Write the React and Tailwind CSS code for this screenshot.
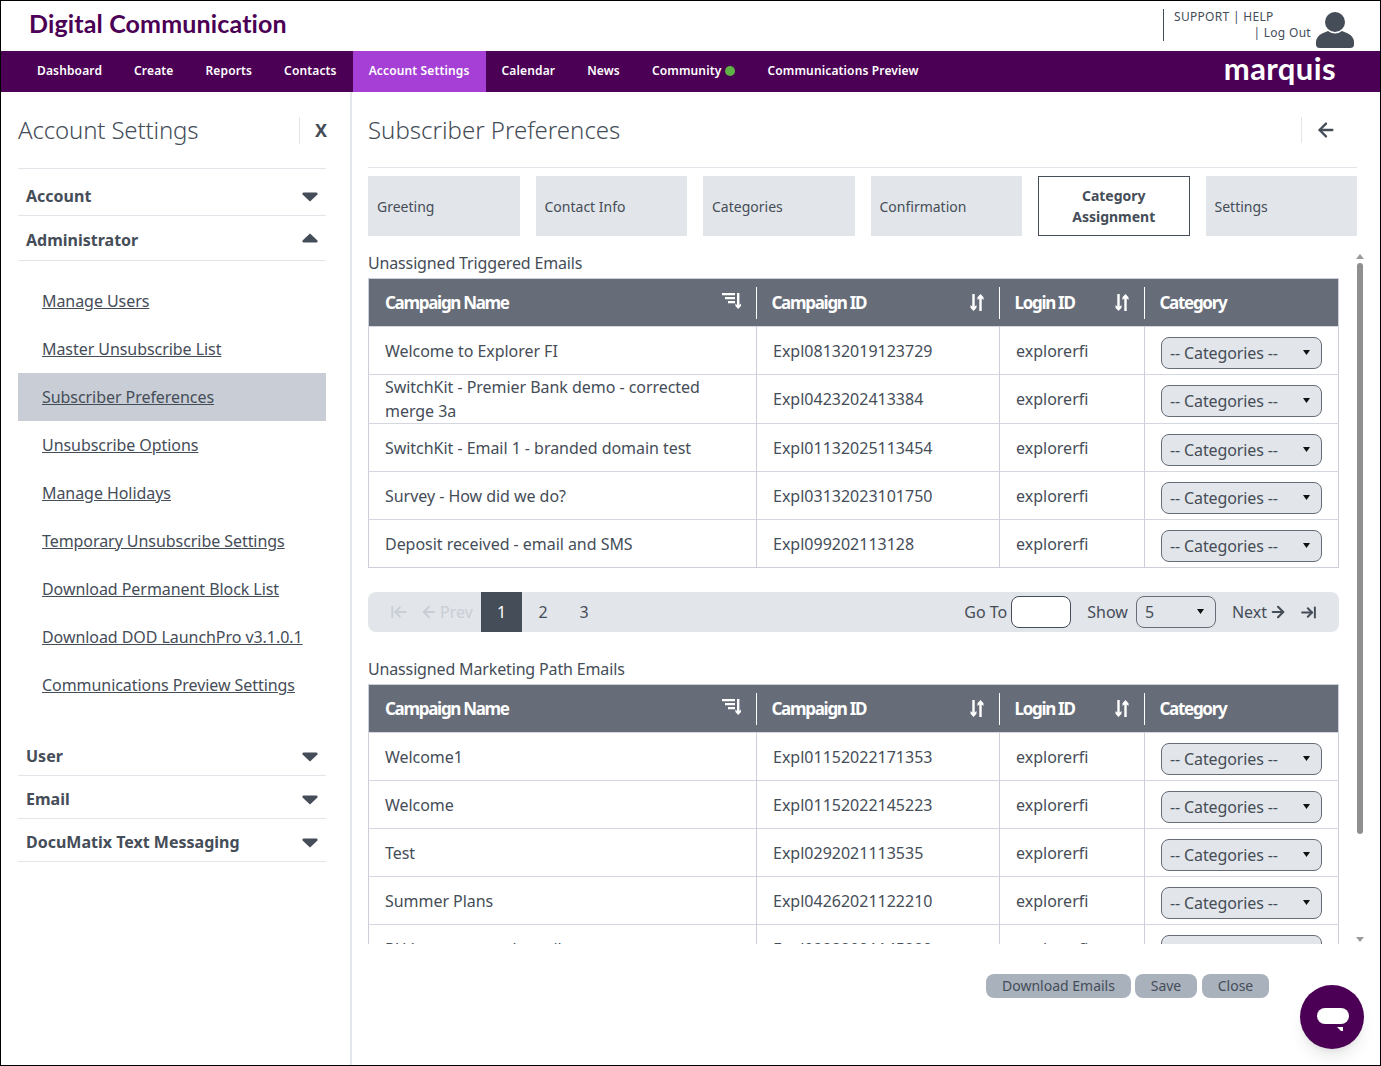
import React from 'react';
import { ArrowLeft, ArrowRight, ArrowLeftToLine, ArrowRightToLine } from 'lucide-react';

const navItems = ['Dashboard', 'Create', 'Reports', 'Contacts'];
const navItemsAfter = ['Calendar', 'News'];

const adminLinks = [
    'Manage Users',
    'Master Unsubscribe List',
    'Subscriber Preferences',
    'Unsubscribe Options',
    'Manage Holidays',
    'Temporary Unsubscribe Settings',
    'Download Permanent Block List',
    'Download DOD LaunchPro v3.1.0.1',
    'Communications Preview Settings',
];

const tabs = ['Greeting', 'Contact Info', 'Categories', 'Confirmation', 'Category Assignment', 'Settings'];

const triggered = [
    { name: 'Welcome to Explorer FI', id: 'Expl08132019123729' },
    { name: 'SwitchKit - Premier Bank demo - corrected merge 3a', id: 'Expl0423202413384', tall: true },
    { name: 'SwitchKit - Email 1 - branded domain test', id: 'Expl01132025113454' },
    { name: 'Survey - How did we do?', id: 'Expl03132023101750' },
    { name: 'Deposit received - email and SMS', id: 'Expl099202113128' },
];

const marketing = [
    { name: 'Welcome1', id: 'Expl01152022171353' },
    { name: 'Welcome', id: 'Expl01152022145223' },
    { name: 'Test', id: 'Expl0292021113535' },
    { name: 'Summer Plans', id: 'Expl04262021122210' },
    { name: 'PH Loan renewed email', id: 'Expl02232021145222' },
];

const Caret = ({ up }) => (
    <svg width="16" height="10" viewBox="0 0 16 10" className="text-[#454d58]">
        <path d={up ? 'M8 .5 15.500 7.500Q16 9.500 14.500 9.500H1.500Q0 9.500.5 7.500Z' : 'M.5 2.500Q0 .5 1.500.5h13q1.500 0 1 2L8 9.500Z'} fill="currentColor" />
    </svg>
);

const SmallCaret = () => (
    <svg width="7" height="5" viewBox="0 0 7 5" className="mb-[1px]"><path d="M0 0h7L3.500 5Z" fill="#111" /></svg>
);

// three shrinking bars with a down arrow beside them
const SortNameIcon = () => (
    <svg width="19" height="16" viewBox="0 0 19 16" fill="#fff" className="mb-[3px]">
        <path d="M0 0h13v2.300H0zM3 4h10v2.300H3zM6 8h7v2.300H6z" />
        <path d="M15 0h2.400v12l1.600-1.500V13l-2.800 3-2.800-3v-2.500l1.600 1.500z" />
    </svg>
);

// down arrow and up arrow side by side
const SortIcon = () => (
    <svg width="14" height="17" viewBox="0 0 14 17" fill="#fff">
        <path d="M2.300 0h2.400v12.500L6.500 11v2.700L3.500 17 .5 13.700V11l1.800 1.500z" />
        <path d="M9.300 17h2.400V4.500L13.500 6V3.300L10.500 0l-3 3.300V6l1.800-1.500z" />
    </svg>
);

const SidebarHeading = ({ label, up, className }) => (
    <div className={`flex items-center justify-between border-b border-[#e2e5e9] pl-2 pr-[8px] ${className}`}>
        <span className="text-[16px] font-bold text-[#454d58]">{label}</span>
        <Caret up={up} />
    </div>
);

const Sidebar = () => (
    <aside className="flex w-[351px] shrink-0 flex-col border-r-2 border-[#e2e5e9] pl-[17px] pr-[24px]">
        <div className="flex h-[76px] items-center justify-between">
            <h2 className="text-[24px] font-light tracking-[-0.15px] text-[#454d58]">Account Settings</h2>
            <div className="-mr-[1px] flex h-[27px] w-[28px] items-center justify-end border-l border-[#e2e5e9] text-[18px] font-bold text-[#454d58]">X</div>
        </div>
        <div className="border-t border-[#e2e5e9]">
            <SidebarHeading label="Account" className="h-[47px] pt-[8px] [&>svg]:mt-[2px]" />
            <SidebarHeading label="Administrator" up className="h-[45px] pt-[4px] [&>svg]:-mt-[4px]" />
        </div>
        <ul className="pt-[16px]">
            {adminLinks.map((link) => (
                <li key={link} className={`flex h-[48px] items-center pl-[24px] text-[16px] tracking-[-0.06px] text-[#454d58] underline ${link === 'Subscriber Preferences' ? 'bg-[#c9ced6]' : ''}`}>
                    {link}
                </li>
            ))}
        </ul>
        <div className="pt-[24px]">
            <SidebarHeading label="User" className="h-[43px] pt-[3px] [&>svg]:mt-[2px]" />
            <SidebarHeading label="Email" className="h-[43px] pt-[3px] [&>svg]:mt-[2px]" />
            <SidebarHeading label="DocuMatix Text Messaging" className="h-[43px] pt-[3px] [&>svg]:mt-[2px]" />
        </div>
    </aside>
);

const Select = ({ label, className }) => (
    <div className={`flex items-center justify-between rounded-[8px] border border-[#666c78] pl-[8px] pr-[11px] text-[16px] tracking-[-0.12px] text-[#454d58] ${className}`}>
        <span>{label}</span>
        <SmallCaret />
    </div>
);

const HeaderCell = ({ label, icon, className }) => (
    <th className={`p-0 text-left font-bold ${className}`}>
        <div className="flex h-[32px] items-center justify-between pl-[16px] pr-[15px] text-[17px] tracking-[-1.3px] text-white">
            <span>{label}</span>
            {icon}
        </div>
    </th>
);

const EmailTable = ({ rows }) => (
    <table className="w-[970px] table-fixed border-collapse border border-[#ccced9] text-[16px] text-[#454d58]">
        <colgroup>
            <col className="w-[388px]" />
            <col className="w-[243px]" />
            <col className="w-[145px]" />
            <col className="w-[194px]" />
        </colgroup>
        <thead>
            <tr className="h-[48px] bg-[#666c78]">
                <HeaderCell label="Campaign Name" icon={<SortNameIcon />} className="[&>div]:border-r [&>div]:border-white" />
                <HeaderCell label="Campaign ID" icon={<SortIcon />} className="[&>div]:border-r [&>div]:border-white [&>div]:pl-[15px]" />
                <HeaderCell label="Login ID" icon={<SortIcon />} className="[&>div]:border-r [&>div]:border-white [&>div]:pl-[15px]" />
                <HeaderCell label="Category" className="[&>div]:pl-[15px]" />
            </tr>
        </thead>
        <tbody>
            {rows.map((row) => (
                <tr key={row.id} className={`border-t border-[#d5d7e0] ${row.tall ? 'h-[49px]' : 'h-[48px]'}`}>
                    <td className="py-0 pl-[16px] pr-[40px] leading-[24px] tracking-[-0.04px]">{row.name}</td>
                    <td className="border-l border-[#ccced9] py-0 pl-[16px]">{row.id}</td>
                    <td className="border-l border-[#ccced9] py-0 pl-[16px]">explorerfi</td>
                    <td className="border-l border-[#ccced9] py-0 pl-[16px]">
                        <Select label="-- Categories --" className="mt-[4px] h-[32px] w-[161px] bg-[#e2e5e9]" />
                    </td>
                </tr>
            ))}
        </tbody>
    </table>
);

const Pagination = () => (
    <div className="mt-[24px] flex h-[40px] w-[971px] items-center rounded-[8px] bg-[#e2e5e9] text-[16px] text-[#454d58]">
        <div className="flex w-[113px] items-center gap-[12px] pl-[22px] text-[#c9ced6]">
            <ArrowLeftToLine size={18} strokeWidth={2.5} />
            <span className="flex items-center gap-[2px]"><ArrowLeft size={18} strokeWidth={2.5} />Prev</span>
        </div>
        <div className="flex h-full w-[41px] items-center justify-center bg-[#454d58] text-white">1</div>
        <div className="flex h-full w-[41px] items-center justify-center pl-[1px]">2</div>
        <div className="flex h-full w-[41px] items-center justify-center pl-[1px]">3</div>
        <div className="ml-auto flex items-center pr-[22px]">
            <span className="mr-[4px]">Go To</span>
            <div className="h-[32px] w-[60px] rounded-[8px] border border-[#454d58] bg-white" />
            <span className="ml-[16px] mr-[8px]">Show</span>
            <Select label="5" className="h-[32px] w-[80px]" />
            <span className="ml-[16px] flex items-center gap-[2px]">Next<ArrowRight size={18} strokeWidth={2.8} /></span>
            <ArrowRightToLine size={17} strokeWidth={2.8} className="ml-[13px]" />
        </div>
    </div>
);

const Scrollbar = () => (
    <div className="flex h-[700px] w-[8px] flex-col items-center pt-[10px]">
        <svg width="8" height="5" viewBox="0 0 8 5"><path d="M4 0l4 5H0Z" fill="#9a9a9a" /></svg>
        <div className="mt-[4px] h-[571px] w-[6px] rounded-[3px] bg-[#8f8f8f]" />
        <svg width="8" height="5" viewBox="0 0 8 5" className="mt-auto mb-[2px]"><path d="M0 0h8L4 5Z" fill="#9a9a9a" /></svg>
    </div>
);

const App = () => (
    <div className="relative flex h-[1066px] w-[1381px] flex-col overflow-hidden border border-black [font-family:'Open_Sans',sans-serif]">
        <header className="flex h-[50px] shrink-0 items-center justify-between pl-[28px] pr-[26px]">
            <h1 className="-mt-[4px] text-[25px] font-bold tracking-[0.15px] text-[#4b0055] [font-family:Lato,sans-serif]">Digital Communication</h1>
            <div className="flex items-center">
                <div className="-mt-[2px] mr-[10px] h-[32px] border-l border-[#454d58]" />
                <div className="-mt-[2px] flex w-[137px] flex-col text-[12px] leading-[16px] tracking-[0.3px] text-[#454d58]">
                    <span>SUPPORT | HELP</span>
                    <span className="text-right">| Log Out</span>
                </div>
                <svg width="38" height="38" viewBox="0 0 38 38" className="ml-[5px] mt-[7px]" fill="#454d58">
                    <circle cx="19" cy="11" r="10" />
                    <path d="M12 20q7 5 14 0l6 2.500q6 3 6 9v2q0 3.500-4 3.500H4q-4 0-4-3.500v-2q0-6 6-9Z" />
                </svg>
            </div>
        </header>
        <nav className="flex h-[41px] shrink-0 items-center bg-[#4b0055] pl-[20px] pr-[44px] text-[12px] font-semibold tracking-[0.14px] text-white">
            {navItems.map((item) => (
                <span key={item} className="px-[16px] pb-[2px]">{item}</span>
            ))}
            <span className="flex h-full items-center bg-[#a63fd6] px-[16px] pb-[2px]">Account Settings</span>
            {navItemsAfter.map((item) => (
                <span key={item} className="px-[16px] pb-[2px]">{item}</span>
            ))}
            <span className="flex items-center gap-[4px] px-[16px] pb-[2px]">Community<i className="h-[10px] w-[10px] rounded-full bg-[#5fb346]" /></span>
            <span className="px-[16px] pb-[2px]">Communications Preview</span>
            <span className="ml-auto pb-[6px] text-[31px] leading-none font-bold tracking-[0.4px] [font-family:Lato,sans-serif]">marquis</span>
        </nav>
        <div className="flex min-h-0 flex-1">
            <Sidebar />
            <main className="flex w-[1005px] flex-col pl-[16px]">
                <div className="flex h-[76px] w-[989px] items-center justify-between border-b border-[#e2e5e9]">
                    <h2 className="text-[24px] font-light text-[#454d58]">Subscriber Preferences</h2>
                    <div className="flex h-[26px] w-[56px] items-center justify-end border-l border-[#e2e5e9] pr-[20px] text-[#454d58]">
                        <ArrowLeft size={22} strokeWidth={2.5} />
                    </div>
                </div>
                <div className="mt-[8px] grid h-[60px] w-[989px] grid-cols-6 gap-[16px] text-[14px] text-[#454d58]">
                    {tabs.map((tab) => (
                        tab === 'Category Assignment' ? (
                            <div key={tab} className="flex items-center justify-center border border-[#454d58] px-[30px] text-center leading-[21px] font-bold">{tab}</div>
                        ) : (
                            <div key={tab} className="flex items-center bg-[#e2e5e9] pl-[9px]">{tab}</div>
                        )
                    ))}
                </div>
                <div className="mt-[8px] flex h-[700px] w-[996px] justify-between overflow-hidden">
                    <div className="w-[971px]">
                        <h3 className="flex h-[34px] items-end pb-[3px] text-[16px] tracking-[-0.15px] text-[#454d58]">Unassigned Triggered Emails</h3>
                        <EmailTable rows={triggered} />
                        <Pagination />
                        <h3 className="flex h-[52px] items-end pb-[3px] text-[16px] tracking-[-0.15px] text-[#454d58]">Unassigned Marketing Path Emails</h3>
                        <EmailTable rows={marketing} />
                    </div>
                    <Scrollbar />
                </div>
                <div className="mt-[30px] flex w-[901px] justify-end gap-[4px] text-[14px] text-[#454d58]">
                    <button className="h-[24px] w-[145px] rounded-[8px] bg-[#a9b1bd] pb-[2px]">Download Emails</button>
                    <button className="h-[24px] w-[62px] rounded-[8px] bg-[#a9b1bd] pb-[2px]">Save</button>
                    <button className="ml-[1px] h-[24px] w-[67px] rounded-[8px] bg-[#a9b1bd] pb-[2px]">Close</button>
                </div>
            </main>
        </div>
        {/* chat bubble floats over the page */}
        <div className="absolute left-[1299px] top-[984px] flex h-[64px] w-[64px] items-center justify-center rounded-full bg-[#4b0055] shadow-lg">
            <svg width="34" height="28" viewBox="0 0 34 28" fill="#fff">
                <rect x="2" y="5" width="32" height="16" rx="8" />
                <path d="M22 24h6v6Z" />
            </svg>
        </div>
    </div>
);

export default App;
